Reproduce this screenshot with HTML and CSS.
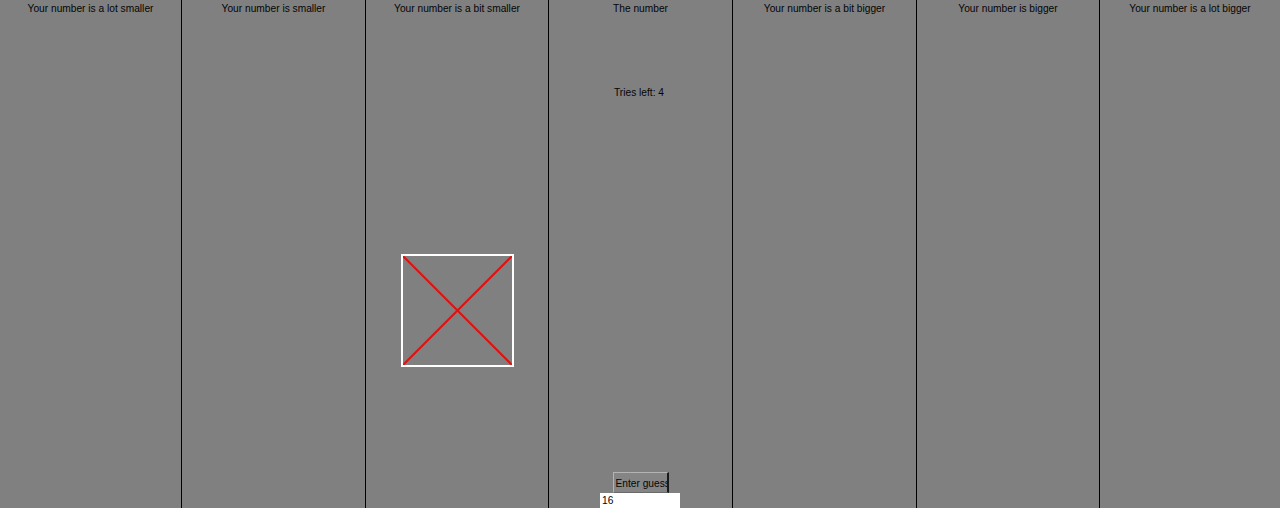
FILE: index.html
```html
<!DOCTYPE html>
<html>
<head>
<meta charset="utf-8">
<link rel="stylesheet" href="styles.css">
</head>
<body>
<div class="board">
  <div class="col"><div class="head">Your number is a lot smaller</div></div>
  <div class="col"><div class="head">Your number is smaller</div></div>
  <div class="col">
    <div class="head">Your number is a bit smaller</div>
    <div class="card">
      <svg width="109" height="109" viewBox="0 0 109 109">
        <line x1="0" y1="0" x2="109" y2="109" stroke="#e01010" stroke-width="2"/>
        <line x1="109" y1="0" x2="0" y2="109" stroke="#e01010" stroke-width="2"/>
      </svg>
    </div>
  </div>
  <div class="col">
    <div class="head">The number</div>
    <div class="tries">Tries left: 4</div>
    <div class="controls">
      <button class="guess">Enter guess</button>
      <input class="field" type="text" value="16">
    </div>
  </div>
  <div class="col"><div class="head">Your number is a bit bigger</div></div>
  <div class="col"><div class="head">Your number is bigger</div></div>
  <div class="col last"><div class="head">Your number is a lot bigger</div></div>
</div>
</body>
</html>
```
FILE: styles.css
```css
html, body {
  margin: 0;
  padding: 0;
  background: #ffffff;
}
body {
  font-family: "Liberation Sans", Arial, sans-serif;
  font-size: 10.2px;
  color: #050505;
}
.board {
  display: grid;
  grid-template-columns: 182px 184px 183px 184px 184px 183px 180px;
  height: 508px;
  background: #808080;
  overflow: hidden;
}
.col {
  box-sizing: border-box;
  border-right: 1px solid #000000;
  display: flex;
  flex-direction: column;
  align-items: center;
  min-width: 0;
}
.col.last {
  border-right: none;
}
.head {
  padding-top: 1px;
  line-height: 16px;
  height: 16px;
  text-align: center;
  white-space: nowrap;
}
.card {
  margin-top: 237px;
  width: 109px;
  height: 109px;
  border: 2px solid #ffffff;
  display: flex;
}
.card svg {
  display: block;
}
.tries {
  margin-top: 68px;
  margin-right: 3px;
  line-height: 16px;
  white-space: nowrap;
}
.controls {
  margin-top: auto;
  display: flex;
  flex-direction: column;
  align-items: center;
}
.guess {
  box-sizing: border-box;
  width: 56px;
  height: 21px;
  margin: 0;
  padding: 1px 0 0 2px;
  font-family: "Liberation Sans", Arial, sans-serif;
  font-size: 10.2px;
  color: #050505;
  text-align: left;
  white-space: nowrap;
  overflow: hidden;
  background: #858585;
  border-top: 1px solid #b4b4b4;
  border-left: 1px solid #b4b4b4;
  border-right: 2px solid #1a1a1a;
  border-bottom: 1px solid #6a6a6a;
}
.field {
  box-sizing: border-box;
  width: 80px;
  height: 15px;
  margin: 0 1px 0 0;
  padding: 0 2px;
  border: none;
  background: #ffffff;
  font-family: "Liberation Sans", Arial, sans-serif;
  font-size: 10.2px;
  color: #050505;
  outline: none;
}
```
